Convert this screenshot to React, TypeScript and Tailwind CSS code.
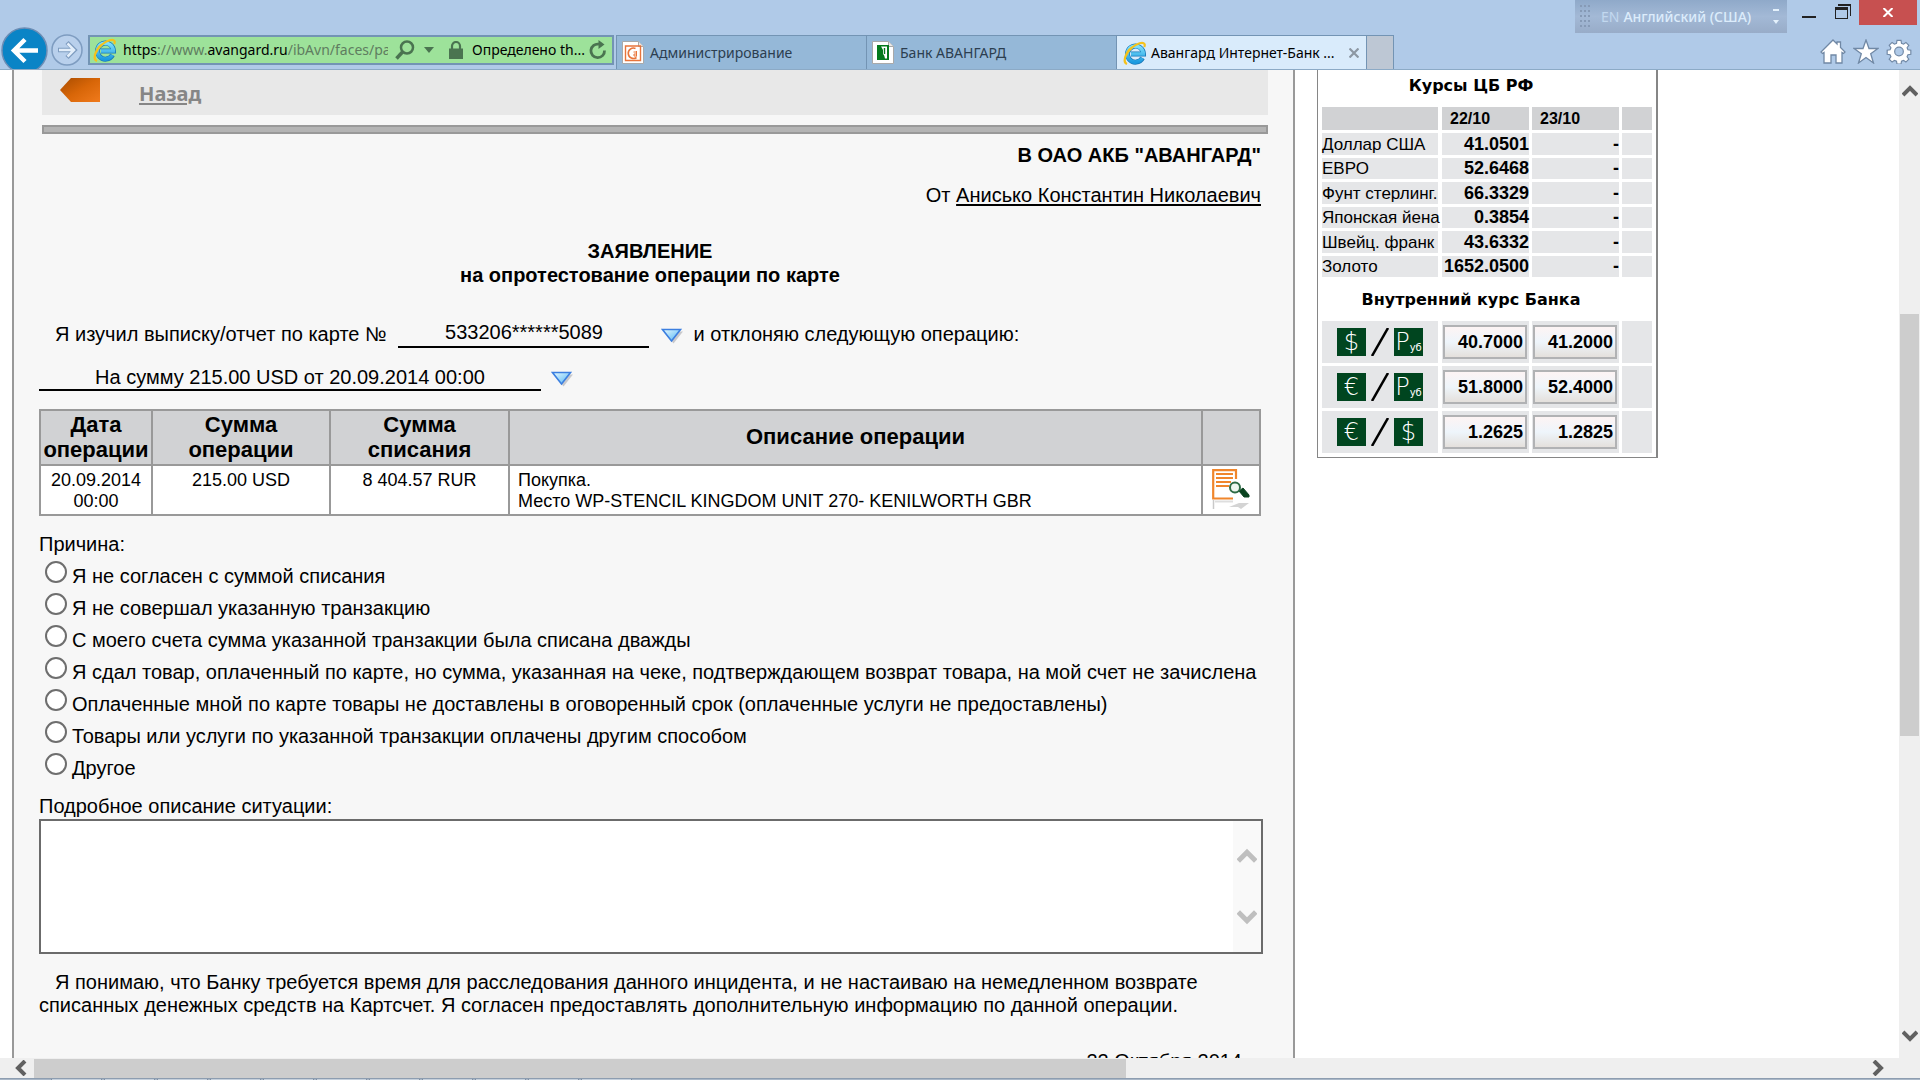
import { useState } from "react";
import type { ReactNode } from "react";

const reasons = [
  "Я не согласен с суммой списания",
  "Я не совершал указанную транзакцию",
  "С моего счета сумма указанной транзакции была списана дважды",
  "Я сдал товар, оплаченный по карте, но сумма, указанная на чеке, подтверждающем возврат товара, на мой счет не зачислена",
  "Оплаченные мной по карте товары не доставлены в оговоренный срок (оплаченные услуги не предоставлены)",
  "Товары или услуги по указанной транзакции оплачены другим способом",
  "Другое",
];

const cbRates = [
  { name: "Доллар США", value: "41.0501" },
  { name: "ЕВРО", value: "52.6468" },
  { name: "Фунт стерлинг.", value: "66.3329" },
  { name: "Японская йена", value: "0.3854" },
  { name: "Швейц. франк", value: "43.6332" },
  { name: "Золото", value: "1652.0500" },
];

const bankRates = [
  { from: "$", to: "Р", buy: "40.7000", sell: "41.2000" },
  { from: "€", to: "Р", buy: "51.8000", sell: "52.4000" },
  { from: "€", to: "$", buy: "1.2625", sell: "1.2825" },
];

const IeLogo = () => (
  <svg viewBox="0 0 24 24" className="h-6 w-6 shrink-0">
    <defs>
      <linearGradient id="ie" x1="0" y1="0" x2="0" y2="1">
        <stop offset="0" stopColor="#7fe0fb" />
        <stop offset="1" stopColor="#1b9ae0" />
      </linearGradient>
    </defs>
    <path d="M19.5 17a8 8 0 1 1 1-4H8" fill="none" stroke="#1878b8" strokeWidth="5" />
    <path d="M19.3 17a8 8 0 1 1 1-4H8" fill="none" stroke="url(#ie)" strokeWidth="3.6" />
    <path d="M4 23C-1 21 3 11 9 6.500C14 2.500 20 .5 21.500 3c.5 1 .2 2-.3 3" fill="none" stroke="#f5c21b" strokeWidth="2.200" />
  </svg>
);

const PageIcon = ({ children }: { children: ReactNode }) => (
  <svg viewBox="0 0 22 23" className="h-[23px] w-[22px] shrink-0">
    <path d="M.5.5h16l5 5v17H.5z" fill="#fff" stroke="#a9a9a9" />
    <path d="M16.500.5v5h5" fill="#e8e8e8" stroke="#a9a9a9" />
    {children}
  </svg>
);

const Chevron = ({ dir, className }: { dir: "up" | "down" | "left" | "right"; className: string }) => {
  const d = {
    up: "M1 12 8 5l7 7",
    down: "M1 4l7 7 7-7",
    left: "M12 1 5 8l7 7",
    right: "M4 1l7 7-7 7",
  }[dir];
  return (
    <svg viewBox="0 0 16 16" className={className} fill="none" stroke="currentColor" strokeWidth="4">
      <path d={d} />
    </svg>
  );
};

const BlueArrow = () => (
  <svg viewBox="0 0 22 16" className="mt-1 h-4 w-[22px] shrink-0">
    <defs>
      <linearGradient id="tri" x1="0" y1="0" x2="1" y2="1">
        <stop offset="0" stopColor="#e8faff" />
        <stop offset="1" stopColor="#4fb4f4" />
      </linearGradient>
    </defs>
    <path d="M3 3.500h19l-9.500 12z" fill="#c9c9cc" />
    <path d="M1.500 1.500h18l-9 11.500z" fill="url(#tri)" stroke="#3c7fe0" strokeWidth="1.600" />
  </svg>
);

const Browser = () => (
  <header className="flex h-[70px] shrink-0 flex-col overflow-hidden border-b border-[#8caac6] bg-[#b0cae8] font-['Noto_Sans',sans-serif]">
    <div className="flex h-[35px] shrink-0 items-start justify-end">
      <div className="flex h-[33px] w-[212px] items-center bg-linear-to-b from-[#8fa9c9] via-[#a3b9d6] to-[#98acc8] pl-[5px] text-sm text-[#dcecfb]">
        <svg viewBox="0 0 12 24" className="h-6 w-3" fill="#869ab6">
          {[0, 5, 10, 15, 20].map((y) => (
            <path key={y} d={`M0 ${y}h2v2H0zM4 ${y}h2v2H4zM8 ${y}h2v2H8z`} />
          ))}
        </svg>
        <span className="ml-[9px] text-[#c2d8ef]">EN</span>
        <span className="ml-1 whitespace-nowrap font-medium">Английский (США)</span>
        <svg viewBox="0 0 8 16" className="ml-auto mr-[7px] h-4 w-2" fill="#e4f1fc">
          <path d="M1 0h6v2H1zM1 11h6l-3 4z" />
        </svg>
      </div>
      <button aria-label="Свернуть" className="ml-[15px] mt-4 h-[2px] w-[14px] bg-[#222]" />
      <button aria-label="Развернуть" className="ml-[19px] mt-1">
        <svg viewBox="0 0 16 15" className="h-[15px] w-4" fill="#222">
          <path d="M3 0h13v12h-1V2H3zM0 3h13v12H0zM1 6v8h11V6z" fillRule="evenodd" />
        </svg>
      </button>
      <button aria-label="Закрыть" className="ml-2 mr-[3px] flex h-[25px] w-[58px] items-center justify-center bg-[#c75050]">
        <svg viewBox="0 0 10 9" className="h-[9px] w-[10px]" stroke="#fff" strokeWidth="2">
          <path d="M.5 0l9 9M9.500 0l-9 9" />
        </svg>
      </button>
    </div>

    <div className="flex h-[34px] items-start">
      <button aria-label="Назад" className="-mt-2 ml-[1px] shrink-0">
        <svg viewBox="0 0 47 47" className="h-[47px] w-[47px]">
          <circle cx="23.500" cy="23.500" r="22.500" fill="#0a84c6" stroke="#6c8db5" strokeWidth="1.500" />
          <path d="M37 23.500H14M24 12.500 13 23.500l11 11" fill="none" stroke="#fff" strokeWidth="4.500" />
        </svg>
      </button>
      <button aria-label="Вперед" className="-mt-[1px] ml-[3px] shrink-0">
        <svg viewBox="0 0 32 32" className="h-8 w-8" fill="none">
          <circle cx="16" cy="16" r="15" stroke="#7e9cc0" strokeWidth="1.500" fill="#b9d0ec" />
          <path d="M7 16h16M16 8.500l7.500 7.500-7.500 7.500" stroke="#7e9cc0" strokeWidth="4.500" />
          <path d="M8 16h15M16.500 9.500l6.500 6.500-6.500 6.500" stroke="#e3eefa" strokeWidth="2.500" />
        </svg>
      </button>
      <div className="ml-[5px] flex h-[30px] w-[526px] shrink-0 items-center border-2 border-[#7394b4] bg-[#9de29a] pl-[3px] text-sm text-black">
        <IeLogo />
        <div className="ml-[6px] w-[265px] overflow-hidden whitespace-nowrap text-[#5f7d60]">
          <span className="text-black">https</span>://www.<span className="text-black">avangard.ru</span>/ibAvn/faces/pa
        </div>
        <button aria-label="Поиск" className="ml-[7px] shrink-0">
          <svg viewBox="0 0 20 20" className="h-5 w-5" fill="none" stroke="#4a7450">
            <circle cx="12" cy="7.500" r="6" strokeWidth="2.500" />
            <path d="M7.500 12 1.500 18.500" strokeWidth="3.500" />
          </svg>
        </button>
        <svg viewBox="0 0 10 6" className="ml-[9px] h-[6px] w-[10px] shrink-0" fill="#4a7450">
          <path d="M0 0h10L5 6z" />
        </svg>
        <svg viewBox="0 0 14 18" className="ml-[15px] h-[18px] w-[14px] shrink-0">
          <path d="M3 8V5a4 4 0 0 1 8 0v3" fill="none" stroke="#4a7450" strokeWidth="2.200" />
          <path d="M0 7.500h14V18H0z" fill="#4a7450" />
        </svg>
        <span className="ml-[9px] whitespace-nowrap">Определено th...</span>
        <button aria-label="Обновить" className="ml-auto mr-[5px] shrink-0">
          <svg viewBox="0 0 18 20" className="h-5 w-[18px]">
            <path d="M15.500 10.500A6.800 6.800 0 1 1 10 4.200" fill="none" stroke="#4a7450" strokeWidth="2.800" />
            <path d="M9.500 0 15.500 4.500 9.500 9z" fill="#4a7450" />
          </svg>
        </button>
      </div>

      <nav className="ml-[2px] flex h-[34px] shrink-0 border-l border-t border-[#7394b4] text-sm">
        <a href="#admin" className="flex w-[250px] items-center gap-[6px] border-r border-[#7394b4] bg-[#95b8d8] pl-[5px] text-[#2c3e50]">
          <PageIcon>
            <path d="M3.500 5h15v14.500h-15z" fill="none" stroke="#e8743b" strokeWidth="1.400" />
            <path d="M13.500 7.500a5.200 5.200 0 1 0 1 9" fill="none" stroke="#e8743b" strokeWidth="1.600" />
            <path d="M14.500 10v5.500M11.500 11h3M14.500 13h-2.500v2h2.500" fill="none" stroke="#e8743b" strokeWidth="1" />
          </PageIcon>
          Администрирование
        </a>
        <a href="#bank" className="flex w-[250px] items-center gap-[6px] border-r border-[#7394b4] bg-[#95b8d8] pl-[5px] text-[#2c3e50]">
          <PageIcon>
            <path d="M5 4h12v15H5z" fill="#047a1c" />
            <path d="M9 5.500h6v12h-2c-.5-2-.5-3-2-4.500V9c-.5-1-1-2-2-3.500z" fill="#fff" />
            <path d="M12.500 7v6" stroke="#047a1c" strokeWidth="1.400" />
          </PageIcon>
          Банк АВАНГАРД
        </a>
        <a href="#ibank" className="flex w-[250px] items-center gap-1 border-r border-[#7394b4] bg-[#d9ebfb] pl-[6px] text-black">
          <IeLogo />
          <span className="whitespace-nowrap">Авангард Интернет-Банк ...</span>
          <svg viewBox="0 0 10 10" className="ml-auto mr-[7px] h-[10px] w-[10px] shrink-0" stroke="#8d98a3" strokeWidth="2.200">
            <path d="M.5.5l9 9M9.500.5l-9 9" />
          </svg>
        </a>
        <button aria-label="Новая вкладка" className="w-[27px] border-r border-[#7394b4] bg-[#bdc7d4]" />
      </nav>

      <div className="ml-auto mr-2 mt-1 flex shrink-0 gap-[7px]">
        <button aria-label="Домой">
          <svg viewBox="0 0 26 25" className="h-[25px] w-[26px]" fill="#fff" stroke="#7088a5" strokeWidth="1.300">
            <path d="M13 1l4 4V3h3.500v5.500L25 13l-1.500 1.500-1.500-1V24h-6v-8h-5v8H4V13.500l-1.500 1L1 13z" />
          </svg>
        </button>
        <button aria-label="Избранное">
          <svg viewBox="0 0 26 25" className="h-[25px] w-[26px]" fill="#fff" stroke="#7088a5" strokeWidth="1.300">
            <path d="M13 1l3 8.500h9l-7.300 5.300L20.500 24 13 18.500 5.500 24l2.800-9.200L1 9.500h9z" />
          </svg>
        </button>
        <button aria-label="Сервис">
          <svg viewBox="0 0 26 26" className="h-[25px] w-[26px]" fill="#fff" stroke="#7088a5" strokeWidth="1.200">
            <path d="M10.900 1.500h4.200l.5 3 2.100.9 2.500-1.800 3 3-1.800 2.500.9 2.100 3 .5v4.200l-3 .5-.9 2.100 1.800 2.500-3 3-2.500-1.800-2.100.9-.5 3h-4.200l-.5-3-2.100-.9-2.500 1.800-3-3 1.800-2.500-.9-2.100-3-.5v-4.200l3-.5.9-2.100-1.800-2.500 3-3 2.500 1.800 2.100-.9z" />
            <circle cx="13" cy="13" r="4.500" fill="#b0cae8" />
          </svg>
        </button>
      </div>
    </div>
  </header>
);

const Coin = ({ sign }: { sign: string }) => (
  <span className="flex h-[28px] w-[29px] items-center justify-center bg-[#00451f] font-['DejaVu_Sans',sans-serif] text-2xl leading-7 font-extralight text-white">
    {sign}
    {sign === "Р" && <small className="self-end text-[10px] leading-4 font-normal">уб</small>}
  </span>
);

const Rates = () => (
  <aside className="mr-[241px] ml-[22px] w-[341px] shrink-0 self-start border-r-2 border-b border-l border-[#868686] bg-white px-1 pb-[1px] text-black">
    <h2 className="mt-1 pr-[32px] text-center font-['DejaVu_Sans',sans-serif] text-base leading-6 font-bold">Курсы ЦБ РФ</h2>
    <table className="mt-[9px] w-full table-fixed border-separate border-spacing-0">
      <colgroup>
        <col className="w-[120px]" />
        <col className="w-[90px]" />
        <col className="w-[90px]" />
        <col />
      </colgroup>
      <thead>
        <tr className="h-[26px] text-left text-base leading-[23px]">
          <th className="border-r-4 border-b-3 border-white bg-[#d1d2d4]" />
          <th className="border-r-3 border-b-3 border-white bg-[#d1d2d4] pl-2">22/10</th>
          <th className="border-r-3 border-b-3 border-white bg-[#d1d2d4] pl-2">23/10</th>
          <th className="border-b-3 border-white bg-[#d1d2d4]" />
        </tr>
      </thead>
      <tbody>
        {cbRates.map((r) => (
          <tr key={r.name} className="h-[25px] text-right text-lg leading-[21px] font-bold even:h-6">
            <td className="border-r-4 border-b-3 border-white bg-[#e5e6e8] text-left text-[17px] font-normal whitespace-nowrap">{r.name}</td>
            <td className="border-r-3 border-b-3 border-white bg-[#e5e6e8]">{r.value}</td>
            <td className="border-r-3 border-b-3 border-white bg-[#e5e6e8]">-</td>
            <td className="border-b-3 border-white bg-[#e5e6e8]" />
          </tr>
        ))}
      </tbody>
    </table>
    <h2 className="mt-[8px] pr-[32px] text-center font-['DejaVu_Sans',sans-serif] text-base leading-6 font-bold">Внутренний курс Банка</h2>
    <table className="mt-[9px] w-full table-fixed border-separate border-spacing-0">
      <colgroup>
        <col className="w-[120px]" />
        <col className="w-[90px]" />
        <col className="w-[90px]" />
        <col />
      </colgroup>
      <tbody>
        {bankRates.map((r) => (
          <tr key={r.buy} className="h-[45px]">
            <td className="border-r-4 border-b-3 border-white bg-[#e5e6e8]">
              <div className="flex items-center justify-center gap-[5px]">
                <Coin sign={r.from} />
                <svg viewBox="0 0 18 28" className="h-7 w-[18px]" stroke="#000" strokeWidth="2.500">
                  <path d="M1 28 17 0" />
                </svg>
                <Coin sign={r.to} />
              </div>
            </td>
            {[r.buy, r.sell].map((v) => (
              <td key={v} className="border-r-3 border-b-3 border-white bg-[#e5e6e8] px-[1px]">
                <button className="block h-[34px] w-[84px] border-2 border-[#b1b2b4] bg-linear-to-b from-[#fdf4f4] via-[#eef5fb] to-[#e4e0dc] pr-[2px] text-right text-lg font-bold">
                  {v}
                </button>
              </td>
            ))}
            <td className="border-b-3 border-white bg-[#e5e6e8]" />
          </tr>
        ))}
      </tbody>
    </table>
  </aside>
);

const Claim = () => {
  const [reason, setReason] = useState<string | null>(null);
  const [details, setDetails] = useState("");

  return (
    <main className="ml-3 min-w-0 flex-1 border-x-2 border-[#999] bg-[#f7f7f7] text-xl leading-6 text-black">
      <div className="mr-[25px] ml-7">
        <div className="flex h-[45px] items-start bg-[#e8e8e8]">
          <svg viewBox="0 0 40 24" className="mt-2 ml-[18px] h-6 w-10">
            <defs>
              <linearGradient id="back" x1="0" y1="0" x2="1" y2="1">
                <stop offset="0" stopColor="#a84c00" />
                <stop offset="0.5" stopColor="#d86608" />
                <stop offset="1" stopColor="#f07a1c" />
              </linearGradient>
            </defs>
            <path d="M0 12 11 0h29v24H11z" fill="url(#back)" />
          </svg>
          <a href="#back" className="mt-3 ml-[39px] font-['Noto_Sans',sans-serif] font-bold text-[#868686] underline decoration-2 underline-offset-2">
            Назад
          </a>
        </div>
        <div className="mt-[10px] h-[9px] border-2 border-[#999] bg-[#b4b4b4]" />
      </div>

      <form className="mr-8 ml-[25px]">
        <p className="mt-[9px] text-right font-bold">В ОАО АКБ "АВАНГАРД"</p>
        <p className="mt-4 text-right">
          От <span className="underline decoration-2 underline-offset-2">Анисько Константин Николаевич</span>
        </p>
        <h1 className="mt-8 text-center font-bold">
          ЗАЯВЛЕНИЕ
          <br />
          на опротестование операции по карте
        </h1>

        <div className="mt-[33px] flex items-center pl-4 whitespace-nowrap">
          <label htmlFor="card">Я изучил выписку/отчет по карте №</label>
          <select id="card" className="ml-3 h-7 w-[251px] appearance-none border-b-2 border-black pb-[5px] text-center">
            <option>533206******5089</option>
          </select>
          <span className="ml-3">
            <BlueArrow />
          </span>
          <span className="ml-[10px]">и отклоняю следующую операцию:</span>
        </div>
        <div className="mt-[15px] flex items-center">
          <select aria-label="Операция" className="h-7 w-[502px] appearance-none border-b-2 border-black pt-[2px] text-center">
            <option>На сумму 215.00 USD от 20.09.2014 00:00</option>
          </select>
          <span className="ml-[10px]">
            <BlueArrow />
          </span>
        </div>

        <table className="mt-[18px] w-full table-fixed border-collapse bg-white text-center text-lg leading-[21px]">
          <colgroup>
            <col className="w-[112px]" />
            <col className="w-[178px]" />
            <col className="w-[179px]" />
            <col />
            <col className="w-[58px]" />
          </colgroup>
          <thead>
            <tr className="h-[55px] bg-[#d1d2d4] text-[22px] leading-[25px]">
              <th className="border-2 border-[#999] pb-[2px]">Дата операции</th>
              <th className="border-2 border-[#999] px-8 pb-[2px]">Сумма операции</th>
              <th className="border-2 border-[#999] px-8 pb-[2px]">Сумма списания</th>
              <th className="border-2 border-[#999] pb-[2px]">Описание операции</th>
              <th className="border-2 border-[#999]" />
            </tr>
          </thead>
          <tbody>
            <tr className="h-[50px] align-top">
              <td className="border-2 border-[#999] px-2 pt-1">20.09.2014 00:00</td>
              <td className="border-2 border-[#999] pt-1">215.00 USD</td>
              <td className="border-2 border-[#999] pt-1">8 404.57 RUR</td>
              <td className="border-2 border-[#999] pt-1 pl-2 text-left">
                Покупка.
                <br />
                Место WP-STENCIL KINGDOM UNIT 270- KENILWORTH GBR
              </td>
              <td className="border-2 border-[#999]">
                <button type="button" aria-label="Подробнее" className="mt-[3px] block pl-[9px]">
                  <svg viewBox="0 0 38 40" className="h-10 w-[38px]">
                    <path d="M1.500 31v9" stroke="#c9c9c9" strokeWidth="1.500" />
                    <path d="M3 32.500h18" stroke="#dedede" strokeWidth="2" />
                    <path d="M17 38l10-4h10l-8 6-3-2z" fill="#d4d4d4" />
                    <path d="M24 10V1.200H1.200v28.300H21" fill="none" stroke="#f0862c" strokeWidth="2.200" />
                    <path d="M4 5h17M4 9h17M4 13h15M4 17h13" stroke="#f0862c" strokeWidth="2" />
                    <path d="M27 22l4-3 6 7v2h-5z" fill="#0a4420" stroke="#0a4420" />
                    <circle cx="23" cy="18.500" r="5" fill="#eef6f0" stroke="#2d6a45" strokeWidth="2" />
                  </svg>
                </button>
              </td>
            </tr>
          </tbody>
        </table>

        <fieldset className="mt-4 min-w-0">
          <legend className="mb-1">Причина:</legend>
          {reasons.map((text) => (
            <label key={text} className="ml-[6px] flex h-8 items-start gap-[5px] leading-8 whitespace-nowrap">
              <input
                type="radio"
                name="reason"
                checked={reason === text}
                onChange={() => setReason(text)}
                className="mt-[1px] h-[22px] w-[22px] shrink-0 appearance-none rounded-full border-2 border-[#6e6e6e] bg-white checked:border-[7px]"
              />
              {text}
            </label>
          ))}
        </fieldset>

        <label htmlFor="details" className="mt-[10px] block">
          Подробное описание ситуации:
        </label>
        <div className="-mr-[2px] mt-[1px] flex h-[135px] border-2 border-[#6b6b6b] bg-white">
          <textarea id="details" value={details} onChange={(e) => setDetails(e.target.value)} className="flex-1 resize-none outline-none" />
          <div className="flex w-7 flex-col items-center justify-between bg-[#f9f9f9] py-[25px] text-[#bfbfbf]">
            <Chevron dir="up" className="h-5 w-5" />
            <Chevron dir="down" className="h-5 w-5" />
          </div>
        </div>

        <p className="mt-[17px] indent-4 leading-[23px]">
          Я понимаю, что Банку требуется время для расследования данного инцидента, и не настаиваю на немедленном возврате
          списанных денежных средств на Картсчет. Я согласен предоставлять дополнительную информацию по данной операции.
        </p>
        <p className="mt-8 pr-[19px] text-right">22 Октября 2014</p>
      </form>
    </main>
  );
};

export default function App() {
  return (
    <div className="flex h-screen flex-col overflow-hidden bg-white font-['Liberation_Sans',Arial,sans-serif]">
      <Browser />
      <div className="flex min-h-0 flex-1">
        <div className="flex min-w-0 flex-1 overflow-hidden">
          <Claim />
          <Rates />
        </div>
        <div className="flex w-[21px] shrink-0 flex-col items-center bg-[#efefef] text-[#606060]">
          <Chevron dir="up" className="mt-[13px] h-4 w-4 shrink-0" />
          <div className="w-full flex-[215]" />
          <div className="w-[19px] flex-[423] bg-[#cdcdcd]" />
          <div className="w-full flex-[292]" />
          <Chevron dir="down" className="mb-[14px] h-4 w-4 shrink-0" />
        </div>
      </div>
      <div className="flex h-5 shrink-0 items-center bg-[#efefef] text-[#606060]">
        <Chevron dir="left" className="ml-[13px] h-4 w-4 shrink-0" />
        <div className="ml-[5px] h-[19px] flex-[1092] self-end bg-[#cdcdcd]" />
        <div className="flex-[744]" />
        <Chevron dir="right" className="mr-[34px] h-4 w-4 shrink-0" />
      </div>
      <div className="flex h-[2px] shrink-0 gap-[2px] border-t border-[#8d9db0] bg-[#a9b7c7] pl-[51px]">
        {Array.from({ length: 11 }, (_, i) => (
          <span key={i} className="w-[51px] border-x border-[#7f8fa3] bg-[#c5d0dc]" />
        ))}
      </div>
    </div>
  );
}
